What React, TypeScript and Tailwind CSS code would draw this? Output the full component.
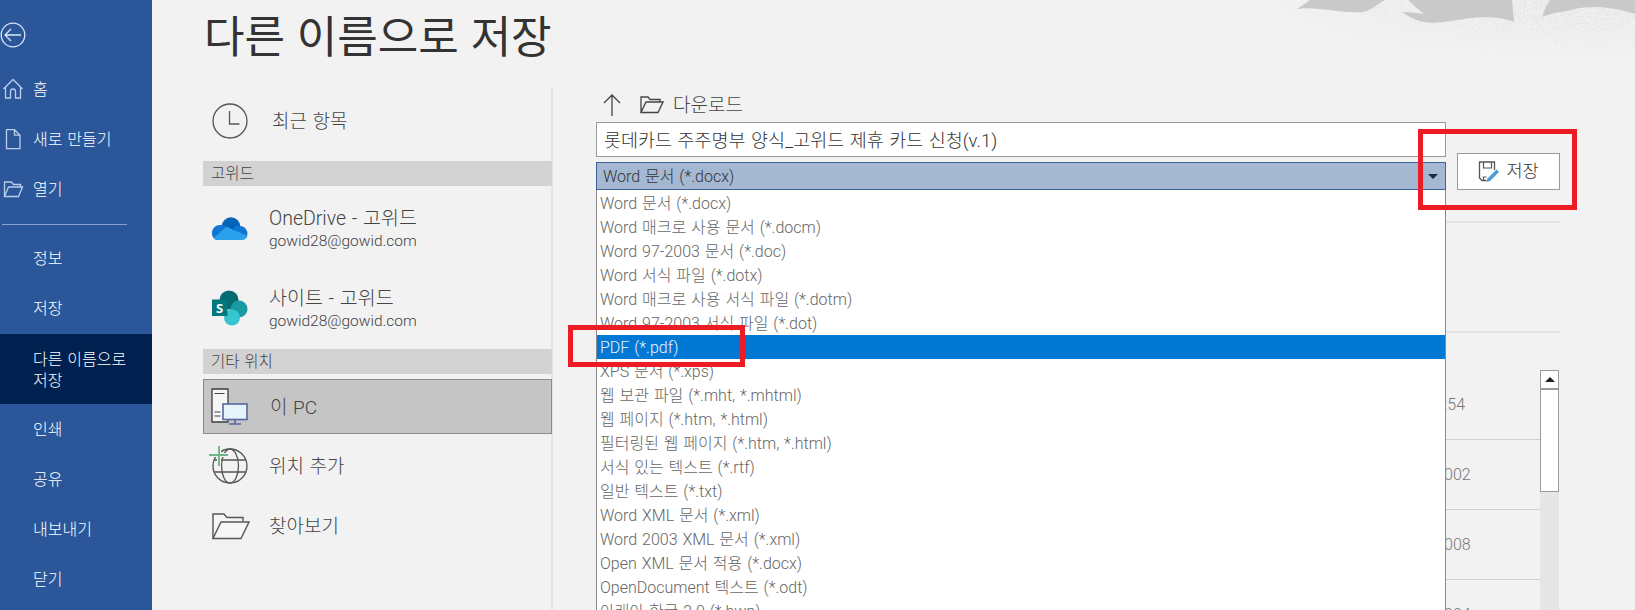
import type { ReactNode } from "react";

const fileTypes = [
  "Word 문서 (*.docx)",
  "Word 매크로 사용 문서 (*.docm)",
  "Word 97-2003 문서 (*.doc)",
  "Word 서식 파일 (*.dotx)",
  "Word 매크로 사용 서식 파일 (*.dotm)",
  "Word 97-2003 서식 파일 (*.dot)",
  "PDF (*.pdf)",
  "XPS 문서 (*.xps)",
  "웹 보관 파일 (*.mht, *.mhtml)",
  "웹 페이지 (*.htm, *.html)",
  "필터링된 웹 페이지 (*.htm, *.html)",
  "서식 있는 텍스트 (*.rtf)",
  "일반 텍스트 (*.txt)",
  "Word XML 문서 (*.xml)",
  "Word 2003 XML 문서 (*.xml)",
  "Open XML 문서 적용 (*.docx)",
  "OpenDocument 텍스트 (*.odt)",
  "아래아 한글 2.0 (*.hwp)",
];

function BackIcon() {
  return (
    <svg width="26" height="26" viewBox="0 0 26 26" fill="none" stroke="#dbe6f5" strokeWidth="1.3">
      <circle cx="13" cy="13" r="11.8" />
      <path d="M5 13h16M11 7l-6 6 6 6" />
    </svg>
  );
}

function HomeIcon() {
  return (
    <svg width="22" height="22" viewBox="0 0 22 22" fill="none" stroke="#b9cdec" strokeWidth="1.3">
      <path d="M1.5 11 11 1.5 20.5 11M3.5 9.5V20h5v-6.5a2.5 2.5 0 0 1 5 0V20h5V9.5" />
    </svg>
  );
}

function NewIcon() {
  return (
    <svg width="22" height="22" viewBox="0 0 22 22" fill="none" stroke="#b9cdec" strokeWidth="1.3">
      <path d="M4.5 1.7h8l5.5 5.5v13.4H4.5zM12.5 1.7v5.5H18" />
    </svg>
  );
}

function OpenIcon() {
  return (
    <svg width="22" height="20" viewBox="0 0 22 20" fill="none" stroke="#b9cdec" strokeWidth="1.3">
      <path d="M2.5 17.5V3h7l2 2.5h7V8M2.5 17.5h14l4-9.5H6.5z" />
    </svg>
  );
}

function ClockIcon() {
  return (
    <svg width="36" height="36" viewBox="0 0 36 36" fill="none" stroke="#555" strokeWidth="1.3">
      <circle cx="18" cy="18" r="17" />
      <path d="M17.5 8v13h10" />
    </svg>
  );
}

function OneDriveIcon() {
  return (
    <svg width="36" height="23" viewBox="0 0 36 23">
      <circle cx="19" cy="9.5" r="9.3" fill="#0364b8" />
      <path d="M22 10c3-2 9-2 11.500 1.500 2 2.500 2.500 5 1.500 7.500l-12-3z" fill="#0f78d4" />
      <path d="M0 16c0-5 4-8.500 9-8 3 0 5 1 7 3l7 5-11 7H6c-3.500 0-6-3-6-7z" fill="#0f78d4" />
      <path d="M14.500 9.800 35.500 19c-1 2.500-3 4-5.500 4H6c-2 0-3.500-.6-4.500-2z" fill="#2aa0ea" />
    </svg>
  );
}

function SharePointIcon() {
  return (
    <svg width="38" height="36" viewBox="0 0 38 36">
      <circle cx="18" cy="10" r="9.500" fill="#036c70" />
      <circle cx="28" cy="19" r="8.500" fill="#1a9ba1" />
      <circle cx="21" cy="27.500" r="8" fill="#37c6d0" />
      <rect x="1" y="9.500" width="15.500" height="16.500" fill="#03787c" />
      <text x="8.700" y="22.500" fill="#fff" fontSize="13" fontWeight="700" textAnchor="middle" fontFamily="'Open Sans', sans-serif">
        S
      </text>
    </svg>
  );
}

function PcIcon() {
  return (
    <svg width="38" height="37" viewBox="0 0 38 37" fill="none">
      <path d="M1 1h16v33H1z" fill="#f6f6f6" stroke="#3c3c3c" strokeWidth="1.300" />
      <path d="M3.500 5.500h10M3.500 24h6M3.500 28h6" stroke="#444" strokeWidth="1.200" />
      <rect x="12" y="16" width="24" height="15.500" fill="#e6f3fb" stroke="#5468a0" strokeWidth="1.600" />
      <path d="M24 32v4M18 36h12" stroke="#5468a0" strokeWidth="1.600" />
    </svg>
  );
}

function GlobeIcon() {
  return (
    <svg width="44" height="42" viewBox="0 0 44 42" fill="none">
      <g stroke="#555" strokeWidth="1.300">
        <circle cx="25" cy="23" r="17" />
        <ellipse cx="25" cy="23" rx="8.500" ry="17" />
        <path d="M9 17h32M9 29h32" />
      </g>
      <path d="M14 2v21M3 12h21" stroke="#f2f2f2" strokeWidth="4" />
      <path d="M14 3v20M4 12h19" stroke="#6fb484" strokeWidth="1.800" />
    </svg>
  );
}

function FolderIcon() {
  return (
    <svg width="38" height="27" viewBox="0 0 38 27" fill="none" stroke="#555" strokeWidth="1.400">
      <path d="M1 25.500V1h11l3 3.500h16V8" fill="#f6f6f6" />
      <path d="M1 25.500h28L37 9H9z" fill="#f6f6f6" />
    </svg>
  );
}

function SmallFolderIcon() {
  return (
    <svg width="24" height="18" viewBox="0 0 24 18" fill="none" stroke="#444" strokeWidth="1.300">
      <path d="M1 16.500V1h7l2 2.500h10V6M1 16.500h17L23 6H6z" />
    </svg>
  );
}

function SaveAsIcon() {
  return (
    <svg width="22" height="22" viewBox="0 0 21 22" fill="none">
      <path d="M8 19.500H3.500L1 17V1h15v8" stroke="#555" strokeWidth="1.300" />
      <path d="M5 1v6h8V1M5 19v-3h3" stroke="#555" strokeWidth="1.200" />
      <path d="M18 8.500l2.500 2.500-9 9-3.500 1 1-3.500z" fill="#4a9bd4" />
    </svg>
  );
}

function BannerArt() {
  return (
    <svg width="405" height="70" viewBox="0 0 405 70" className="absolute top-0 right-0">
      <defs>
        <filter id="speckle" x="0" y="0" width="100%" height="100%">
          <feTurbulence type="fractalNoise" baseFrequency="1.100" numOctaves="2" seed="4" />
          <feColorMatrix
            type="matrix"
            values="0 0 0 0 0.74  0 0 0 0 0.74  0 0 0 0 0.74  3.500 0 0 0 -1.400"
          />
        </filter>
        <radialGradient id="fade" gradientUnits="userSpaceOnUse" cx="360" cy="0" r="320" gradientTransform="matrix(1 0 0 0.18 0 0)">
          <stop offset="0" stopColor="#fff" stopOpacity="1" />
          <stop offset="0.5" stopColor="#fff" stopOpacity="0.6" />
          <stop offset="1" stopColor="#fff" stopOpacity="0" />
        </radialGradient>
        <mask id="fadeMask">
          <rect width="405" height="70" fill="url(#fade)" />
        </mask>
      </defs>
      <rect width="405" height="70" filter="url(#speckle)" mask="url(#fadeMask)" />
      <path d="M67 9 80 0h75c-8 4-14 11-22 12-22 2-44-6-66-3z" fill="#c9c9c9" />
      <path d="M172 12c8 0 14 1 22 2-6-4-10-9-16-14h104l2 22c-12-5-30-6-50-3-18 3-32 5-40 3-10-2-16-6-22-10z" fill="#c9c9c9" />
      <path d="M312 17c3-7 4-12 8-17h85v14c-18-6-44-10-64-4-10 2-20 3-29 7z" fill="#c9c9c9" />
    </svg>
  );
}

function NavRow({ icon, label }: { icon?: ReactNode; label: string }) {
  return (
    <div className="flex h-[50px] items-center">
      <div className="flex w-[33px] justify-center pr-[9px] pl-[1px]">{icon}</div>
      <span className="pt-[2px]">{label}</span>
    </div>
  );
}

function PlaceRow({ icon, title, sub, offset }: { icon: ReactNode; title: string; sub: string; offset?: string }) {
  return (
    <div className={`flex h-[81px] items-center ${offset ?? ""}`}>
      <div className="flex w-[66px] justify-center pl-[2px] pr-[14px]">{icon}</div>
      <div className="flex flex-col pt-[2px]">
        <span className="text-[19.500px] leading-[24px]">{title}</span>
        <span className="text-[15.500px] leading-[20px]">{sub}</span>
      </div>
    </div>
  );
}

function FileRow({ time }: { time: string }) {
  return (
    <div className="flex h-[70px] items-center border-b border-[#d0d0d0] pl-[1px] text-[16px] text-[#777]">
      {time}
    </div>
  );
}

export default function App() {
  return (
    <div
      className="relative flex h-[610px] w-[1635px] overflow-hidden bg-[#f2f2f2] font-light [word-spacing:0.06em] text-[#444]"
      style={{ fontFamily: "Roboto, 'Noto Sans CJK KR', sans-serif" }}
    >
      <aside className="flex w-[152px] shrink-0 flex-col bg-[#2b579a] text-[16px] text-white">
        <div className="flex h-[64px] items-start pt-[22px]">
          <BackIcon />
        </div>
        <NavRow icon={<HomeIcon />} label="홈" />
        <NavRow icon={<NewIcon />} label="새로 만들기" />
        <NavRow icon={<OpenIcon />} label="열기" />
        <div className="mt-[10px] mb-[8px] ml-[2px] w-[125px] border-t border-[#86a3cf]" />
        <NavRow label="정보" />
        <NavRow label="저장" />
        <div className="mt-[1px] flex h-[70px] items-center bg-[#002050] pt-[2px] pl-[33px] leading-[21px]">
          다른 이름으로
          <br />
          저장
        </div>
        <NavRow label="인쇄" />
        <NavRow label="공유" />
        <NavRow label="내보내기" />
        <NavRow label="닫기" />
      </aside>

      <main className="relative flex min-w-0 flex-1 flex-col">
        <BannerArt />
        <h1 className="flex h-[88px] shrink-0 items-center pb-[12px] pl-[52px] text-[44px] font-normal text-[#333]">
          다른 이름으로 저장
        </h1>
        <div className="flex min-h-0 flex-1">
          <div className="ml-[51px] w-[350px] shrink-0 border-r-2 border-[#e3e3e3]">
            <div className="w-[349px]">
              <div className="flex h-[73px] items-center pb-[8px] text-[19px]">
                <div className="flex w-[69px] justify-center pl-[2px] pr-[17px]">
                  <ClockIcon />
                </div>
                <span className="pt-[4px]">최근 항목</span>
              </div>
              <div className="flex h-[25px] items-center bg-[#d2d2d2] pt-[2px] pl-[8px] text-[15.500px]">고위드</div>
              <PlaceRow icon={<OneDriveIcon />} title="OneDrive - 고위드" sub="gowid28@gowid.com" offset="pt-[3px]" />
              <PlaceRow icon={<SharePointIcon />} title="사이트 - 고위드" sub="gowid28@gowid.com" />
              <div className="mt-[1px] flex h-[25px] items-center bg-[#d2d2d2] pt-[3px] pl-[8px] text-[15.500px]">기타 위치</div>
              <div className="mt-[5px] flex h-[55px] items-center border border-[#8a8a8a] bg-[#c5c5c5] text-[19px]">
                <div className="flex w-[66px] justify-center pl-[1px] pr-[16px]">
                  <PcIcon />
                </div>
                <span className="pt-[3px]">이 PC</span>
              </div>
              <div className="flex h-[64px] items-center text-[19px]">
                <div className="mb-[4px] flex w-[66px] justify-center pr-[18px]">
                  <GlobeIcon />
                </div>
                <span className="pt-[3px]">위치 추가</span>
              </div>
              <div className="flex h-[56px] items-center text-[19px]">
                <div className="flex w-[66px] justify-center pl-[3px] pr-[13px]">
                  <FolderIcon />
                </div>
                <span className="pt-[2px]">찾아보기</span>
              </div>
            </div>
          </div>

          <div className="relative flex-1 pl-[43px]">
            <div className="flex h-[34px] items-center pl-[7px] text-[19px]">
              <svg width="18" height="22" viewBox="0 0 18 22" fill="none" stroke="#444" strokeWidth="1.300">
                <path d="M9 22V1M1 9l8-8 8 8" />
              </svg>
              <span className="mr-[9px] ml-[19px] flex">
                <SmallFolderIcon />
              </span>
              <span className="pt-[3px]">다운로드</span>
            </div>
            <div className="flex w-[964px] items-end">
              <div className="w-[850px] shrink-0">
                <div className="flex h-[35px] items-center border border-[#9a9a9a] bg-white pt-[4px] pl-[7px] text-[18.500px] text-[#333]">
                  롯데카드 주주명부 양식_고위드 제휴 카드 신청(v.1)
                </div>
                <div className="relative mt-[5px]">
                  <div className="flex h-[28px] items-center justify-between border border-[#3f6296] bg-[#a5b8d2] pr-[7px] pl-[6px] text-[16px] text-[#333]">
                    <span className="pt-[2px]">Word 문서 (*.docx)</span>
                    <svg width="10" height="5" viewBox="0 0 10 5">
                      <path d="M0 0h10L5 5z" fill="#1f2a3a" />
                    </svg>
                  </div>
                  <ul className="absolute top-full left-0 z-10 h-[430px] w-full border-x border-[#8a8a8a] bg-white pt-[1px] text-[16px] text-[#666]">
                    {fileTypes.map((t) => (
                      <li
                        key={t}
                        className={
                          t.startsWith("PDF")
                            ? "flex h-[24px] items-center bg-[#0078d4] pt-[2px] pl-[3px] text-[#e8f2fb]"
                            : "flex h-[24px] items-center pt-[2px] pl-[3px]"
                        }
                      >
                        {t}
                      </li>
                    ))}
                  </ul>
                </div>
              </div>
              <button className="ml-[11px] flex h-[37px] w-[103px] items-center justify-center gap-[6px] border border-[#9a9a9a] bg-white text-[17.500px] text-[#333]">
                <SaveAsIcon />
                저장
              </button>
            </div>
            <div className="mt-[31px] h-[112px] w-[964px] border-y-2 border-[#e3e3e3]" />
            <div className="flex w-[964px] pt-[37px]">
              <div className="w-[944px] pl-[847px]">
                <FileRow time=":54" />
                <FileRow time="002" />
                <FileRow time="008" />
                <FileRow time="004" />
              </div>
              <div className="flex h-[300px] w-[19px] flex-col bg-[#e6e6e6]">
                <div className="flex h-[19px] items-center justify-center border border-[#9a9a9a] bg-white">
                  <svg width="10" height="5" viewBox="0 0 10 5">
                    <path d="M5 0l5 5H0z" fill="#222" />
                  </svg>
                </div>
                <div className="h-[103px] border border-[#9a9a9a] bg-white" />
              </div>
            </div>
          </div>
        </div>
      </main>

      <div className="absolute top-[129px] left-[1418px] z-20 h-[81px] w-[159px] border-[5px] border-[#ed1c24]" />
      <div className="absolute top-[325px] left-[568px] z-20 h-[42px] w-[177px] border-[5px] border-[#ed1c24]" />
    </div>
  );
}
